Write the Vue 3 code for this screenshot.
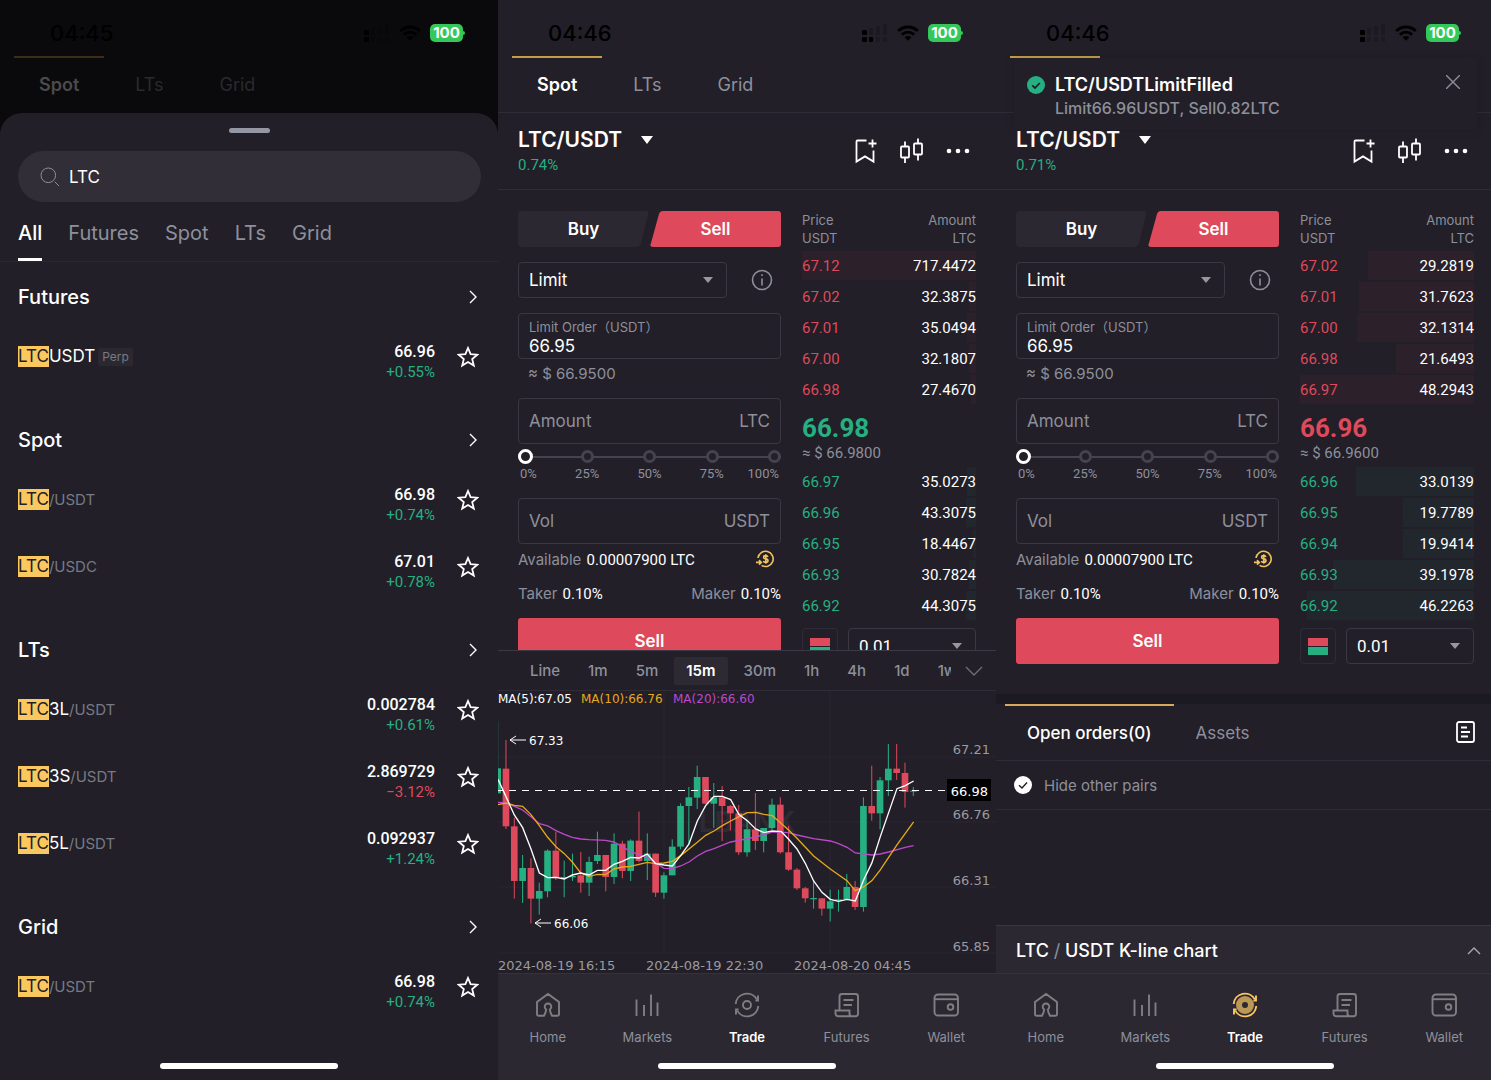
<template>
  <main class="board">
    <section
      v-for="screen in screens"
      :key="screen.id"
      class="phone"
      :class="{ 'phone--dimmed': screen.search }"
    >
      <!-- Device status bar -->
      <header class="status">
        <span class="status-time">{{ screen.time }}</span>
        <div class="status-icons">
          <svg class="icon-signal" viewBox="0 0 26 18">
            <rect x="0" y="6" width="5" height="5" rx="1" />
            <rect x="0" y="13" width="5" height="5" rx="1" />
            <g class="signal-off">
              <rect x="7" y="4" width="4" height="7" rx="1" />
              <rect x="14" y="2" width="4" height="9" rx="1" />
              <rect x="21" y="0" width="4" height="11" rx="1" />
              <rect x="14" y="13" width="4" height="5" rx="1" />
              <rect x="21" y="13" width="4" height="5" rx="1" />
            </g>
            <rect
              x="7"
              y="13"
              width="4"
              height="5"
              rx="1"
              :class="{ 'signal-off': !screen.secondSim }"
            />
          </svg>
          <svg class="icon-wifi" viewBox="0 0 22 16">
            <path d="M11 15.8 L7.6 12.3 A4.9 4.9 0 0 1 14.4 12.3 Z" />
            <path d="M3.9 8.6 A10 10 0 0 1 18.1 8.6 L16 10.7 A7 7 0 0 0 6 10.7 Z" />
            <path d="M.2 4.9 A15.3 15.3 0 0 1 21.8 4.9 L19.7 7 A12.3 12.3 0 0 0 2.3 7 Z" />
          </svg>
          <span class="battery">100</span>
        </div>
      </header>

      <nav class="market-tabs" :class="{ 'market-tabs--covered': screen.toast }">
        <a
          v-for="tab in marketTabs"
          :key="tab"
          href="#"
          class="market-tab"
          :class="{ active: tab === 'Spot' }"
        ><span>{{ tab }}</span></a>
      </nav>

      <!-- Pair search sheet -->
      <div v-if="screen.search" class="sheet">
        <div class="sheet-handle"></div>
        <label class="search-box">
          <svg class="icon-search" viewBox="0 0 20 20">
            <circle cx="8.3" cy="8.3" r="7.3" />
            <path d="M14.8 14.8 L19 19" />
          </svg>
          <input v-model="query" type="text" class="search-input" aria-label="Search pairs" />
        </label>

        <nav class="filter-tabs">
          <a
            v-for="filter in filters"
            :key="filter"
            href="#"
            class="filter-tab"
            :class="{ active: filter === 'All' }"
          >{{ filter }}</a>
        </nav>

        <div class="results">
          <section v-for="group in groups" :key="group.name" class="group">
            <a href="#" class="group-head">
              <h2>{{ group.name }}</h2>
              <svg class="icon-chevron" viewBox="0 0 8 14"><path d="M1 1 L7 7 L1 13" /></svg>
            </a>
            <div v-for="row in group.rows" :key="row.base + row.quote" class="result">
              <div class="result-name">
                <mark>LTC</mark><span class="result-base">{{ row.base }}</span><span class="result-quote">{{ row.quote }}</span>
                <span v-if="row.tag" class="result-tag">{{ row.tag }}</span>
              </div>
              <div class="result-price">
                <strong>{{ row.price }}</strong>
                <span :class="row.down ? 'down' : 'up'">{{ row.change }}</span>
              </div>
              <button type="button" class="star" aria-label="Add to favorites">
                <svg viewBox="0 0 22 22">
                  <path d="M11 2 L13.6 8.1 L20.3 8.7 L15.2 13.1 L16.8 19.6 L11 16.1 L5.2 19.6 L6.8 13.1 L1.7 8.7 L8.4 8.1 Z" />
                </svg>
              </button>
            </div>
          </section>
        </div>
        <div class="home-bar"></div>
      </div>

      <!-- Trading screen -->
      <template v-else>
        <div class="pair">
          <div>
            <button type="button" class="pair-name">
              LTC/USDT
              <svg class="pair-caret" viewBox="0 0 14 10"><path d="M1 1 H13 L7 9 Z" /></svg>
            </button>
            <p class="pair-change">{{ screen.change }}</p>
          </div>
          <div class="pair-actions">
            <button type="button" aria-label="Add to watchlist">
              <svg viewBox="0 0 24 26">
                <path d="M12.5 2.5 H3.5 Q2.5 2.5 2.5 3.5 V23.6 L11 18.4 L19.5 23.6 V12.5" />
                <path d="M18.5 1.5 V9.5 M14.5 5.5 H22.5" />
              </svg>
            </button>
            <button type="button" aria-label="Chart">
              <svg viewBox="0 0 24 26">
                <rect x="1" y="8.5" width="8" height="11" rx="1" />
                <rect x="14" y="5.5" width="8" height="11" rx="1" />
                <path d="M5 3.5 V8.5 M5 19.5 V25 M18 .5 V5.5 M18 16.5 V22.5" />
              </svg>
            </button>
            <button type="button" aria-label="More">
              <svg viewBox="0 0 24 26" class="icon-more">
                <circle cx="3" cy="13" r="2.3" />
                <circle cx="12" cy="13" r="2.3" />
                <circle cx="21" cy="13" r="2.3" />
              </svg>
            </button>
          </div>
        </div>

        <div class="trade" :class="{ 'trade--clipped': screen.chart }">
          <form class="order" @submit.prevent>
            <div class="sides">
              <button type="button" class="side side--buy">
                <svg viewBox="0 0 131 36" preserveAspectRatio="none">
                  <path d="M4 0 H128 Q131 0 130 4 L123 32 Q122 36 118 36 H4 Q0 36 0 32 V4 Q0 0 4 0 Z" />
                </svg>
                <span>Buy</span>
              </button>
              <button type="button" class="side side--sell">
                <svg viewBox="0 0 131 36" preserveAspectRatio="none">
                  <path d="M13 0 H128 Q131 0 131 3 V33 Q131 36 128 36 H3 Q-1 36 1 32 L9 3 Q10 0 13 0 Z" />
                </svg>
                <span>Sell</span>
              </button>
            </div>

            <div class="type-row">
              <div class="select-box">
                <select aria-label="Order type">
                  <option>Limit</option>
                </select>
                <svg class="caret" viewBox="0 0 10 6"><path d="M0 0 H10 L5 6 Z" /></svg>
              </div>
              <button type="button" class="info" aria-label="Order type help">
                <svg viewBox="0 0 22 22">
                  <circle cx="11" cy="11" r="9.5" />
                  <path d="M11 9.5 V16.5 M11 5.3 V7" />
                </svg>
              </button>
            </div>

            <label class="field field--price">
              <span class="field-label">Limit Order（USDT）</span>
              <input type="text" :value="screen.limit" />
            </label>
            <p class="field-hint">≈ $ {{ screen.limit }}00</p>

            <label class="field">
              <input type="text" placeholder="Amount" aria-label="Amount" />
              <span class="field-unit">LTC</span>
            </label>

            <div class="percent">
              <div class="percent-line">
                <div class="percent-track"></div>
                <div class="percent-dots"><i v-for="step in steps" :key="step"></i></div>
                <input type="range" min="0" max="100" value="0" step="25" aria-label="Order percentage" />
              </div>
              <div class="percent-labels">
                <span v-for="step in steps" :key="step">{{ step }}%</span>
              </div>
            </div>

            <label class="field">
              <input type="text" placeholder="Vol" aria-label="Volume" />
              <span class="field-unit">USDT</span>
            </label>

            <div class="available">
              <p>Available <b>0.00007900 LTC</b></p>
              <button type="button" aria-label="Transfer">
                <svg viewBox="0 0 20 18">
                  <path class="coin-ring" d="M3 8 A7.6 7.6 0 1 1 6.6 15.4" />
                  <path class="coin-arrow" d="M1 12.4 H6 M4 10.2 L6.3 12.4 L4 14.6" />
                  <path class="coin-sign" d="M12.9 6.9 Q12.5 5.6 10.7 5.6 Q8.6 5.6 8.6 7.2 Q8.6 8.6 10.7 8.9 Q13 9.2 13 10.8 Q13 12.4 10.8 12.4 Q8.8 12.4 8.4 11 M10.8 4.2 V13.8" />
                </svg>
              </button>
            </div>
            <div class="fees">
              <p>Taker <b>0.10%</b></p>
              <p>Maker <b>0.10%</b></p>
            </div>
            <button type="submit" class="submit">Sell</button>
          </form>

          <div class="book">
            <table>
              <thead>
                <tr>
                  <th>Price<br />USDT</th>
                  <th>Amount<br />LTC</th>
                </tr>
              </thead>
              <tbody class="asks">
                <tr v-for="ask in screen.asks" :key="ask[0]" :style="{ backgroundSize: ask[2] + '% 29px' }">
                  <td>{{ ask[0] }}</td>
                  <td>{{ ask[1] }}</td>
                </tr>
              </tbody>
              <tbody>
                <tr>
                  <td colspan="2" class="last">
                    <strong :class="screen.lastDown ? 'down' : 'up'">{{ screen.last }}</strong>
                    <span>≈ $ {{ screen.last }}00</span>
                  </td>
                </tr>
              </tbody>
              <tbody class="bids">
                <tr v-for="bid in screen.bids" :key="bid[0]" :style="{ backgroundSize: bid[2] + '% 29px' }">
                  <td>{{ bid[0] }}</td>
                  <td>{{ bid[1] }}</td>
                </tr>
              </tbody>
            </table>
            <div class="book-tools">
              <button type="button" class="depth-mode" aria-label="Order book view">
                <i class="depth-ask"></i>
                <i class="depth-bid"></i>
              </button>
              <div class="select-box">
                <select aria-label="Price step">
                  <option>0.01</option>
                </select>
                <svg class="caret" viewBox="0 0 10 6"><path d="M0 0 H10 L5 6 Z" /></svg>
              </div>
            </div>
          </div>
        </div>

        <!-- K-line chart -->
        <div v-if="screen.chart" class="chart">
          <div class="intervals">
            <div class="interval-list">
              <button
                v-for="interval in intervals"
                :key="interval"
                type="button"
                :class="{ active: interval === '15m' }"
              >{{ interval }}</button>
            </div>
            <button type="button" class="interval-more" aria-label="Collapse chart">
              <svg viewBox="0 0 18 10"><path d="M1 1 L9 9 L17 1" /></svg>
            </button>
          </div>
          <svg class="kline" viewBox="0 0 498 282">
            <path class="grid-line" d="M0 66 H498 M0 131 H498 M0 196 H498 M0 262 H498 M166 0 V262 M332 0 V262" />
            <text class="watermark" x="249" y="141" text-anchor="middle">LBANK</text>
            <g transform="translate(0 -41) scale(0.3333)">
              <g v-for="(candle, i) in candles" :key="i" :class="candle[4] ? 'candle-up' : 'candle-down'">
                <rect :x="candleX(i) - 1.5" :y="candle[0]" width="3" :height="candle[3] - candle[0]" />
                <rect :x="candleX(i) - 10" :y="candle[1]" width="20" :height="candle[2] - candle[1]" />
              </g>
              <polyline class="ma ma20" :points="ma20" />
              <polyline class="ma ma10" :points="ma10" />
              <polyline class="ma ma5" :points="ma5" />
            </g>
            <path class="last-line" d="M-2 99.5 H449" />
            <g class="legend">
              <text x="0" y="12">MA(5):67.05</text>
              <text x="83" y="12" class="legend-ma10">MA(10):66.76</text>
              <text x="175" y="12" class="legend-ma20">MA(20):66.60</text>
              <text x="31" y="54">67.33</text>
              <text x="56" y="237">66.06</text>
            </g>
            <path class="pointer" d="M28 49 H12 M18 45 L12 49 L18 53 M53 232 H37 M43 228 L37 232 L43 236" />
            <g class="axis">
              <text x="492" y="63" text-anchor="end">67.21</text>
              <text x="492" y="128" text-anchor="end">66.76</text>
              <text x="492" y="194" text-anchor="end">66.31</text>
              <text x="492" y="260" text-anchor="end">65.85</text>
              <text x="0" y="279">2024-08-19 16:15</text>
              <text x="148" y="279">2024-08-19 22:30</text>
              <text x="296" y="279">2024-08-20 04:45</text>
            </g>
            <rect class="last-tag" x="449" y="88" width="44" height="22" />
            <text class="last-tag-text" x="490" y="105" text-anchor="end">66.98</text>
          </svg>
        </div>

        <!-- Open orders -->
        <template v-else>
          <div class="orders">
            <nav class="order-tabs">
              <a href="#" class="order-tab active">Open orders(0)</a>
              <a href="#" class="order-tab">Assets</a>
              <button type="button" class="history" aria-label="Order history">
                <svg viewBox="0 0 20 22">
                  <rect x="1" y="1" width="17" height="20" rx="2" />
                  <path d="M5 6.5 H11 M5 11 H14 M5 15.5 H12" />
                </svg>
              </button>
            </nav>
            <label class="hide-pairs">
              <input type="checkbox" checked />
              <span class="tick">
                <svg viewBox="0 0 18 18"><path d="M5 9.2 L8 12 L13 6.6" /></svg>
              </span>
              Hide other pairs
            </label>
          </div>
          <button type="button" class="kline-bar">
            <span>LTC <i>/</i> USDT K-line chart</span>
            <svg viewBox="0 0 14 8"><path d="M1 7 L7 1 L13 7" /></svg>
          </button>
        </template>

        <footer class="footer">
          <nav class="footer-nav">
            <a
              v-for="item in footerTabs"
              :key="item"
              href="#"
              class="footer-tab"
              :class="{ active: item === 'Trade', gold: item === 'Trade' && !screen.chart }"
            >
              <svg viewBox="0 0 26 26">
                <template v-if="item === 'Home'">
                  <path d="M9 23.8 H3.8 Q2 23.8 2 22 V10 L13 2 L24 10 V22 Q24 23.8 22.2 23.8 H17 Q15 20 14.8 17.5 A3.3 3.3 0 1 0 11.2 17.5 Q11 20 9 23.8 Z" />
                </template>
                <template v-else-if="item === 'Markets'">
                  <path d="M2.5 7.5 V24 M10 13 V24 M17 2.5 V24 M23.5 10.5 V24" />
                </template>
                <template v-else-if="item === 'Trade'">
                  <path d="M1.7 12 A11.3 11.3 0 0 1 22.8 7.4 M24 3.4 V8.6 H21.4 M24.3 14 A11.3 11.3 0 0 1 3.2 18.6 M2 22.6 V17.4 H4.6" />
                  <circle class="trade-core" cx="13" cy="13" r="4" />
                </template>
                <template v-else-if="item === 'Futures'">
                  <path d="M5.5 18.5 V4.5 Q5.5 2 8 2 H21.5 Q24 2 24 4.5 V21.5 Q24 24.3 21.5 24.3 H4.5 Q1.5 24.3 1.5 21.5 V18.5 H15.5 V21.5 Q15.5 24.3 18 24.3 M9.5 8 H19.5 M9.5 13 H18" />
                </template>
                <template v-else>
                  <rect x="1.5" y="2.5" width="23.5" height="21" rx="3.5" />
                  <path d="M1.5 7.2 H25" />
                  <circle cx="17.5" cy="15" r="2.8" />
                </template>
              </svg>
              <span>{{ item }}</span>
            </a>
          </nav>
          <div class="home-bar"></div>
        </footer>
      </template>

      <!-- Fill notification -->
      <div v-if="screen.toast" class="toast" role="status">
        <svg class="toast-ok" viewBox="0 0 18 18">
          <circle cx="9" cy="9" r="9" />
          <path d="M5.2 9.4 L8 12 L12.8 7" />
        </svg>
        <div class="toast-text">
          <strong>LTC/USDTLimitFilled</strong>
          <span>Limit66.96USDT, Sell0.82LTC</span>
        </div>
        <button type="button" class="toast-close" aria-label="Close">
          <svg viewBox="0 0 14 14"><path d="M0 0 L14 14 M14 0 L0 14" /></svg>
        </button>
      </div>
    </section>
  </main>
</template>

<script setup>
import { ref } from 'vue';

const query = ref('LTC');

const marketTabs = ['Spot', 'LTs', 'Grid'];
const filters = ['All', 'Futures', 'Spot', 'LTs', 'Grid'];
const footerTabs = ['Home', 'Markets', 'Trade', 'Futures', 'Wallet'];
const intervals = ['Line', '1m', '5m', '15m', '30m', '1h', '4h', '1d', '1w'];
const steps = [0, 25, 50, 75, 100];

const groups = [
  {
    name: 'Futures',
    rows: [{ base: 'USDT', quote: '', tag: 'Perp', price: '66.96', change: '+0.55%' }]
  },
  {
    name: 'Spot',
    rows: [
      { base: '', quote: '/USDT', price: '66.98', change: '+0.74%' },
      { base: '', quote: '/USDC', price: '67.01', change: '+0.78%' }
    ]
  },
  {
    name: 'LTs',
    rows: [
      { base: '3L', quote: '/USDT', price: '0.002784', change: '+0.61%' },
      { base: '3S', quote: '/USDT', price: '2.869729', change: '−3.12%', down: true },
      { base: '5L', quote: '/USDT', price: '0.092937', change: '+1.24%' }
    ]
  },
  {
    name: 'Grid',
    rows: [{ base: '', quote: '/USDT', price: '66.98', change: '+0.74%' }]
  }
];

// Book rows: price, amount, depth in percent
const screens = [
  { id: 'search', time: '04:45', search: true },
  {
    id: 'chart',
    time: '04:46',
    secondSim: true,
    chart: true,
    change: '0.74%',
    limit: '66.95',
    last: '66.98',
    asks: [
      ['67.12', '717.4472', 100],
      ['67.02', '32.3875', 4],
      ['67.01', '35.0494', 5],
      ['67.00', '32.1807', 4],
      ['66.98', '27.4670', 3]
    ],
    bids: [
      ['66.97', '35.0273', 5],
      ['66.96', '43.3075', 6],
      ['66.95', '18.4467', 2],
      ['66.93', '30.7824', 4],
      ['66.92', '44.3075', 6]
    ]
  },
  {
    id: 'orders',
    time: '04:46',
    toast: true,
    change: '0.71%',
    limit: '66.95',
    last: '66.96',
    lastDown: true,
    asks: [
      ['67.02', '29.2819', 61],
      ['67.01', '31.7623', 66],
      ['67.00', '32.1314', 67],
      ['66.98', '21.6493', 45],
      ['66.97', '48.2943', 100]
    ],
    bids: [
      ['66.96', '33.0139', 68],
      ['66.95', '19.7789', 41],
      ['66.94', '19.9414', 41],
      ['66.93', '39.1978', 81],
      ['66.92', '46.2263', 96]
    ]
  }
];

// Candles: wick top, body top, body bottom, wick bottom, rising
const candles = [
  [213, 355, 430, 430, 1], [270, 356, 529, 537, 0], [503, 529, 693, 746, 0], [615, 654, 693, 759, 1],
  [625, 654, 746, 820, 0], [698, 723, 746, 794, 1], [598, 602, 724, 742, 1], [545, 602, 683, 690, 0],
  [632, 681, 684, 742, 1], [611, 678, 682, 693, 1], [606, 676, 698, 728, 0], [620, 636, 698, 738, 1],
  [545, 615, 633, 642, 1], [615, 615, 681, 724, 0], [550, 581, 681, 702, 1], [572, 581, 663, 685, 0],
  [568, 572, 663, 693, 1], [485, 572, 633, 637, 0], [550, 611, 633, 690, 1], [611, 611, 728, 741, 0],
  [667, 676, 728, 746, 1], [568, 590, 676, 676, 1], [460, 468, 590, 598, 1], [411, 442, 468, 582, 1],
  [347, 381, 443, 477, 1], [381, 381, 461, 461, 0], [399, 442, 461, 534, 1], [408, 442, 468, 573, 0],
  [465, 468, 490, 542, 0], [465, 490, 607, 615, 0], [510, 538, 607, 620, 1], [429, 538, 573, 600, 0],
  [534, 534, 573, 607, 1], [446, 464, 534, 540, 1], [442, 464, 607, 611, 0], [528, 607, 659, 663, 0],
  [654, 659, 715, 720, 0], [711, 715, 745, 758, 0], [690, 744, 748, 776, 1], [745, 745, 776, 797, 0],
  [719, 754, 776, 815, 1], [719, 748, 752, 785, 1], [672, 711, 748, 750, 1], [693, 711, 771, 780, 0],
  [442, 468, 771, 785, 1], [347, 468, 490, 512, 0], [381, 391, 490, 538, 1], [282, 356, 391, 438, 1],
  [282, 356, 369, 390, 0], [338, 369, 426, 473, 0], [411, 422, 425, 438, 1]
];

const candleX = (i) => i * 24.94 - 1;

const ma5 = '0,388 24,440 49,495 74,533 99,597 124,669 149,683 174,682 199,687 223,675 248,669 273,675 298,661 323,661 348,643 373,634 398,622 423,624 448,612 473,641 498,645 523,648 548,617 573,582 598,513 623,467 648,439 673,439 698,449 723,494 748,512 773,537 798,548 823,543 850,545 872,568 897,597 922,640 947,693 972,727 997,748 1022,754 1047,748 1072,753 1097,690 1122,638 1147,560 1172,488 1197,416 1222,407 1247,393';
const ma10 = '0,464 24,459 49,466 74,469 99,494 124,527 149,562 174,590 199,611 223,636 248,669 273,679 298,673 323,674 348,657 373,651 398,649 423,643 448,637 473,641 498,639 523,634 548,617 573,597 598,577 623,556 648,543 673,527 698,513 723,500 748,488 773,487 798,493 823,497 872,540 897,565 947,618 997,657 1047,692 1072,722 1097,711 1122,692 1147,660 1197,585 1247,516';
const ma20 = '0,457 24,458 49,469 74,480 99,500 124,521 149,528 174,542 199,553 223,562 248,567 273,569 323,571 348,576 398,605 448,623 498,655 523,656 548,648 573,636 598,618 623,604 648,596 698,576 750,566 800,554 823,546 872,548 897,555 947,566 997,573 1022,581 1047,592 1072,609 1122,615 1147,612 1172,606 1222,592 1247,587';
</script>

<style>
body {
  margin: 0;
  background: #221f28;
  overflow: hidden;
}
</style>

<style scoped>
.board {
  --bg: #221f28;
  --panel: #2b2832;
  --line: #2f2c37;
  --box: #3b3843;
  --grey: #8d909b;
  --green: #26b082;
  --red: #de4a5b;
  --gold: #fbc75f;
  display: grid;
  grid-template-columns: repeat(3, 1fr);
  /* the last screen runs slightly past the edge */
  width: calc(100% + 3px);
  color: #fff;
  font-family: Inter, "Noto Sans CJK SC", sans-serif;
}

.board *,
.board *::before {
  box-sizing: border-box;
}

p,
h2 {
  margin: 0;
}

button {
  padding: 0;
  border: 0;
  background: none;
  color: inherit;
  font: inherit;
  cursor: pointer;
}

input,
select {
  min-width: 0;
  margin: 0;
  padding: 0;
  border: 0;
  outline: 0;
  background: none;
  color: #fff;
  font: inherit;
  appearance: none;
}

a {
  color: inherit;
  text-decoration: none;
}

svg {
  display: block;
  fill: none;
  stroke: currentColor;
}

.up {
  color: var(--green);
}

.down {
  color: var(--red);
}

.phone {
  position: relative;
  display: flex;
  flex-direction: column;
  min-width: 0;
  height: 100vh;
  min-height: 1080px;
  overflow: hidden;
  background: var(--bg);
}

.phone--dimmed {
  background: #0a090b;
}

/* Status bar */
.status {
  display: flex;
  align-items: flex-end;
  justify-content: space-between;
  height: 56px;
  padding: 0 35px 10px 50px;
  color: #000;
}

.status-time {
  font-size: 22px;
  font-weight: 500;
  line-height: 26px;
}

.status-icons {
  display: flex;
  align-items: center;
  height: 26px;
  gap: 9px;
}

.status-icons svg {
  fill: #000;
  stroke: none;
}

.icon-signal {
  width: 26px;
  height: 18px;
}

.icon-signal .signal-off {
  fill: #1b1921;
}

.phone--dimmed .signal-off {
  fill: #08070a;
}

.icon-wifi {
  width: 22px;
  height: 16px;
}

.battery {
  position: relative;
  width: 33px;
  height: 18px;
  border-radius: 5px;
  background: #34c759;
  color: #fff;
  font-size: 15px;
  font-weight: 700;
  line-height: 18px;
  text-align: center;
}

.battery::before {
  content: '';
  position: absolute;
  top: 7px;
  right: -2px;
  width: 2px;
  height: 4px;
  border-radius: 0 2px 2px 0;
  background: #34c759;
}

/* Market tabs */
.market-tabs {
  display: flex;
  flex: none;
  gap: 6px;
  height: 57px;
  padding-left: 14px;
  border-bottom: 1px solid var(--line);
}

.market-tab {
  height: 46px;
  padding: 0 25px;
  border-top: 2px solid transparent;
  color: var(--grey);
  font-size: 18px;
  line-height: 54px;
}

.market-tab.active {
  border-top-color: #c59d49;
  color: #fff;
  font-weight: 600;
}

.market-tabs--covered span {
  visibility: hidden;
}

.phone--dimmed .market-tabs {
  border-bottom-color: transparent;
}

.phone--dimmed .market-tab {
  color: #2a2a2d;
}

.phone--dimmed .market-tab.active {
  border-top-color: #3c2d18;
  color: #4b4b4b;
}

/* Search sheet */
.sheet {
  display: flex;
  flex: 1;
  flex-direction: column;
  border-radius: 22px 22px 0 0;
  background: var(--bg);
}

.sheet-handle {
  width: 41px;
  height: 5px;
  margin: 15px auto 18px;
  border-radius: 3px;
  background: #9497a3;
}

.search-box {
  display: flex;
  align-items: center;
  gap: 9px;
  height: 51px;
  margin: 0 17px 0 18px;
  padding: 0 22px;
  border-radius: 26px;
  background: #312e38;
}

.icon-search {
  width: 20px;
  height: 20px;
  color: var(--grey);
}

.search-input {
  flex: 1;
  font-size: 17px;
}

.filter-tabs {
  display: flex;
  gap: 26px;
  height: 60px;
  padding-left: 18px;
  border-bottom: 1px solid #2a2731;
  color: var(--grey);
  font-size: 20px;
  line-height: 62px;
}

.filter-tab.active {
  border-bottom: 3px solid #fff;
  color: #fff;
  font-weight: 500;
}

.results {
  padding: 6px 18px 0;
}

.group {
  padding-bottom: 16px;
}

.group-head {
  display: flex;
  align-items: center;
  justify-content: space-between;
  height: 60px;
  padding: 0 3px 2px 0;
}

.group-head h2 {
  font-size: 20px;
  font-weight: 500;
}

.icon-chevron {
  width: 8px;
  height: 14px;
  stroke-width: 1.4;
}

.result {
  display: flex;
  align-items: center;
  height: 67px;
}

.result-name {
  display: flex;
  flex: 1;
  align-items: center;
  padding-bottom: 10px;
  font-size: 17px;
  line-height: 21px;
}

.result-name mark {
  background: var(--gold);
  color: #221f28;
}

.result-quote {
  color: #777a84;
  font-size: 15px;
}

.result-tag {
  margin-left: 3px;
  padding: 0 4px;
  border-radius: 2px;
  background: var(--panel);
  color: #777a84;
  font-size: 12px;
  line-height: 18px;
}

.result-price {
  display: flex;
  flex-direction: column;
  align-items: flex-end;
  font-family: Roboto, sans-serif;
  font-size: 15px;
  line-height: 21px;
}

.result-price strong {
  font-size: 16px;
  font-weight: 500;
}

.star {
  width: 22px;
  height: 22px;
  margin: 0 1px 10px 22px;
}

.star path {
  stroke-width: 1.8;
}

.home-bar {
  flex: none;
  width: 178px;
  height: 6px;
  margin: auto auto 11px;
  border-radius: 3px;
  background: #fff;
}

/* Pair header */
.pair {
  display: flex;
  flex: none;
  justify-content: space-between;
  height: 77px;
  padding: 13px 26px 0 20px;
  border-bottom: 1px solid var(--line);
}

.pair-name {
  display: flex;
  align-items: center;
  gap: 18px;
  font-size: 21px;
  font-weight: 600;
  line-height: 28px;
}

.pair-caret {
  width: 14px;
  height: 10px;
  fill: #fff;
  stroke: none;
}

.pair-change {
  color: var(--green);
  font-family: Roboto, sans-serif;
  font-size: 15px;
  line-height: 22px;
}

.pair-actions {
  display: flex;
  align-items: flex-start;
  gap: 22px;
  padding-top: 12px;
}

.pair-actions svg {
  width: 24px;
  height: 26px;
  stroke-width: 1.8;
}

.pair-actions .icon-more {
  fill: #fff;
  stroke: none;
}

/* Order form */
.trade {
  display: grid;
  flex: none;
  grid-template-columns: minmax(0, 263fr) minmax(0, 174fr);
  align-items: start;
  gap: 21px;
  padding: 21px 20px 30px;
}

.trade--clipped {
  flex: 1 1 0;
  min-height: 0;
  padding-bottom: 0;
  overflow: hidden;
}

.order {
  display: flex;
  flex-direction: column;
  color: var(--grey);
}

.sides {
  display: grid;
  grid-template-columns: 1fr 1fr;
  gap: 1px;
}

.side {
  display: grid;
  height: 36px;
  color: #fff;
  font-size: 17px;
  font-weight: 600;
}

.side > * {
  grid-area: 1 / 1;
  place-self: center;
}

.side svg {
  width: 100%;
  height: 36px;
  fill: var(--panel);
  stroke: none;
}

.side--sell svg {
  fill: var(--red);
}

.type-row {
  display: flex;
  align-items: center;
  justify-content: space-between;
  gap: 24px;
  margin: 15px 0;
  padding-right: 8px;
}

.select-box {
  display: flex;
  flex: 1;
  align-items: center;
  min-width: 0;
  height: 36px;
  padding: 0 13px 0 10px;
  border: 1px solid var(--box);
  border-radius: 4px;
}

.select-box select {
  flex: 1;
  font-size: 17px;
}

.caret {
  flex: none;
  width: 10px;
  height: 6px;
  fill: #97979c;
  stroke: none;
}

.info svg {
  width: 22px;
  height: 22px;
  color: var(--grey);
  stroke-width: 1.6;
}

.field {
  display: flex;
  align-items: center;
  height: 46px;
  padding: 0 10px;
  border: 1px solid var(--box);
  border-radius: 4px;
  font-size: 17px;
}

.field input {
  flex: 1;
}

.field input::placeholder {
  color: var(--grey);
  opacity: 1;
}

.field--price {
  flex-direction: column;
  align-items: stretch;
  padding-top: 4px;
}

.field-label {
  font-size: 13px;
  line-height: 18px;
}

.field--price input {
  flex: none;
  height: 20px;
}

.field-hint {
  height: 39px;
  padding: 4px 10px;
  font-size: 15px;
  line-height: 21px;
}

.percent {
  height: 54px;
  padding-top: 5px;
}

.percent-line {
  display: grid;
  align-items: center;
  height: 15px;
}

.percent-line > * {
  grid-area: 1 / 1;
}

.percent-track {
  height: 2px;
  background: #45444e;
}

.percent-dots {
  display: flex;
  justify-content: space-between;
}

.percent-dots i {
  width: 13px;
  height: 13px;
  border: 3px solid #45444e;
  border-radius: 50%;
  background: var(--bg);
}

.percent-line input {
  width: 100%;
  height: 15px;
}

.percent-line input::-webkit-slider-thumb {
  width: 15px;
  height: 15px;
  border: 3px solid #fff;
  border-radius: 50%;
  background: var(--bg);
  appearance: none;
}

.percent-labels {
  display: grid;
  grid-template-columns: 38px 1fr 1fr 1fr 38px;
  padding-top: 1px;
  font-family: Roboto, sans-serif;
  font-size: 13px;
  line-height: 18px;
  text-align: center;
}

.percent-labels span:first-child {
  padding-left: 2px;
  text-align: left;
}

.percent-labels span:last-child {
  padding-right: 2px;
  text-align: right;
}

.available,
.fees {
  display: flex;
  align-items: center;
  justify-content: space-between;
  height: 30px;
  font-size: 15px;
}

.available b,
.fees b {
  margin-left: 1px;
  color: #fff;
  font-family: Roboto, sans-serif;
  font-weight: 400;
}

.available button {
  padding-right: 6px;
}

.available svg {
  width: 20px;
  height: 18px;
  color: #f3c15c;
}

.coin-ring,
.coin-arrow,
.coin-sign {
  stroke-width: 1.6;
}

.fees {
  height: 44px;
  padding-bottom: 6px;
}

.submit {
  height: 46px;
  border-radius: 3px;
  background: var(--red);
  color: #fff;
  font-size: 17px;
  font-weight: 600;
}

/* Order book */
.book {
  font-family: Roboto, sans-serif;
  font-size: 15px;
}

.book table {
  width: 100%;
  border-collapse: collapse;
}

.book th {
  height: 39px;
  padding: 0;
  color: var(--grey);
  font-family: Inter, sans-serif;
  font-size: 13px;
  font-weight: 400;
  line-height: 18px;
  text-align: left;
  vertical-align: top;
}

.book td {
  height: 31px;
  padding: 0;
}

.book th:last-child,
.book td:nth-child(2) {
  text-align: right;
}

.asks tr,
.bids tr {
  background-repeat: no-repeat;
  background-position: right center;
}

.asks tr {
  background-image: linear-gradient(#2c212a, #2c212a);
}

.bids tr {
  background-image: linear-gradient(#22272e, #22272e);
}

.asks td:first-child {
  color: var(--red);
}

.bids td:first-child {
  color: var(--green);
}

.book .last {
  height: 61px;
  padding-top: 5px;
}

.last strong,
.last span {
  display: block;
}

.last strong {
  font-size: 26px;
  line-height: 30px;
}

.last span {
  color: var(--grey);
  line-height: 20px;
}

.book-tools {
  display: flex;
  gap: 10px;
  padding-top: 7px;
}

.depth-mode {
  display: flex;
  flex: none;
  flex-direction: column;
  align-items: center;
  justify-content: center;
  gap: 1px;
  width: 36px;
  height: 36px;
  border: 1px solid var(--line);
  border-radius: 4px;
}

.depth-mode i {
  width: 20px;
  height: 8px;
  background: var(--red);
}

.depth-mode .depth-bid {
  background: var(--green);
}

/* Chart */
.chart {
  flex: none;
  border-top: 1px solid #3a3944;
}

.intervals {
  display: flex;
  align-items: center;
  height: 40px;
  padding: 0 13px 0 20px;
  border-bottom: 1px solid var(--line);
}

.interval-list {
  display: flex;
  flex: 1;
  gap: 4px;
  min-width: 0;
  overflow: hidden;
}

.interval-list button {
  flex: none;
  height: 28px;
  padding: 0 12px;
  border-radius: 2px;
  color: var(--grey);
  font-size: 15px;
  font-weight: 500;
}

.interval-list .active {
  background: #2d2a34;
  color: #fff;
  font-weight: 600;
}

.interval-more {
  margin-left: 14px;
}

.interval-more svg {
  width: 18px;
  height: 10px;
  color: #6d6c76;
  stroke-width: 1.4;
}

.kline {
  width: 100%;
  height: auto;
}

.kline text {
  fill: #fff;
  stroke: none;
  font-family: "DejaVu Sans", sans-serif;
  font-size: 12px;
}

.grid-line {
  stroke: #2a2731;
}

.kline .watermark {
  fill: #2e2b35;
  font-family: Inter, sans-serif;
  font-size: 28px;
  font-weight: 700;
}

.candle-up {
  fill: var(--green);
  stroke: none;
}

.candle-down {
  fill: var(--red);
  stroke: none;
}

.ma {
  stroke-width: 4;
}

.ma5 {
  stroke: #fff;
}

.ma10 {
  stroke: #e5a91c;
}

.ma20 {
  stroke: #bb49cb;
}

.last-line {
  stroke: #fff;
  stroke-dasharray: 7 6;
}

.pointer {
  stroke: #fff;
}

.kline .legend-ma10 {
  fill: #e5a91c;
}

.kline .legend-ma20 {
  fill: #bb49cb;
}

.kline .axis text,
.kline .last-tag-text {
  font-size: 13px;
}

.kline .axis text {
  fill: #9a9aa0;
}

.last-tag {
  fill: #000;
  stroke: none;
}

/* Open orders */
.orders {
  flex: 1;
  border-top: 10px solid #1b1921;
}

.order-tabs {
  display: flex;
  align-items: center;
  height: 57px;
  padding: 0 18px 0 9px;
  border-bottom: 1px solid var(--line);
  font-size: 17px;
}

.order-tab {
  height: 56px;
  padding: 0 22px;
  border-top: 2px solid transparent;
  color: var(--grey);
  line-height: 54px;
}

.order-tab.active {
  border-top-color: #d3ab5a;
  color: #fff;
  font-weight: 500;
}

.history {
  margin-left: auto;
}

.history svg {
  width: 20px;
  height: 22px;
  stroke-width: 1.8;
}

.hide-pairs {
  display: flex;
  align-items: center;
  gap: 12px;
  height: 49px;
  padding-left: 18px;
  border-bottom: 1px solid var(--line);
  color: var(--grey);
  font-size: 15px;
}

.hide-pairs input {
  position: absolute;
  width: 18px;
  height: 18px;
}

.tick svg {
  width: 18px;
  height: 18px;
  border-radius: 50%;
  background: #fff;
  color: #221f28;
  stroke-width: 1.4;
}

.kline-bar {
  display: flex;
  flex: none;
  align-items: center;
  justify-content: space-between;
  height: 48px;
  padding: 2px 13px 0 20px;
  border-top: 1px solid #3a3742;
  background: var(--panel);
  font-size: 18px;
  font-weight: 500;
}

.kline-bar i {
  color: var(--grey);
  font-style: normal;
  font-weight: 400;
}

.kline-bar svg {
  width: 14px;
  height: 8px;
  color: #a9abb4;
  stroke-width: 1.4;
}

/* Bottom navigation */
.footer {
  flex: none;
  height: 107px;
  border-top: 1px solid #35323d;
  background: var(--panel);
}

.footer-nav {
  display: grid;
  grid-template-columns: repeat(5, 1fr);
  padding: 18px 0 17px;
}

.footer-tab {
  display: flex;
  flex-direction: column;
  align-items: center;
  gap: 10px;
  color: var(--grey);
  font-size: 13px;
  line-height: 18px;
}

.footer-tab svg {
  width: 26px;
  height: 26px;
  color: #807e80;
  stroke-width: 1.9;
}

.footer-tab.active {
  color: #fff;
  font-weight: 600;
}

.footer-tab.gold svg {
  color: var(--gold);
}

.gold .trade-core {
  r: 6px;
  stroke: #bb9855;
  stroke-width: 6;
}

/* Toast */
.toast {
  position: absolute;
  top: 58px;
  right: 17px;
  left: 18px;
  display: flex;
  align-items: flex-start;
  height: 72px;
  padding: 15px 17px 0 13px;
  border-radius: 3px;
  background: var(--bg);
  box-shadow: 0 0 10px rgba(0, 0, 0, 0.15);
}

.toast-ok {
  width: 18px;
  height: 18px;
  margin: 3px 10px 0 0;
}

.toast-ok circle {
  fill: var(--green);
  stroke: none;
}

.toast-ok path {
  stroke: #221f28;
  stroke-width: 1.8;
}

.toast-text {
  display: flex;
  flex: 1;
  flex-direction: column;
}

.toast-text strong {
  font-size: 18px;
  font-weight: 600;
  line-height: 24px;
}

.toast-text span {
  color: var(--grey);
  font-size: 16px;
  font-weight: 500;
  line-height: 23px;
}

.toast-close {
  margin-top: 2px;
}

.toast-close svg {
  width: 14px;
  height: 14px;
  color: var(--grey);
  stroke-width: 1.4;
}
</style>
